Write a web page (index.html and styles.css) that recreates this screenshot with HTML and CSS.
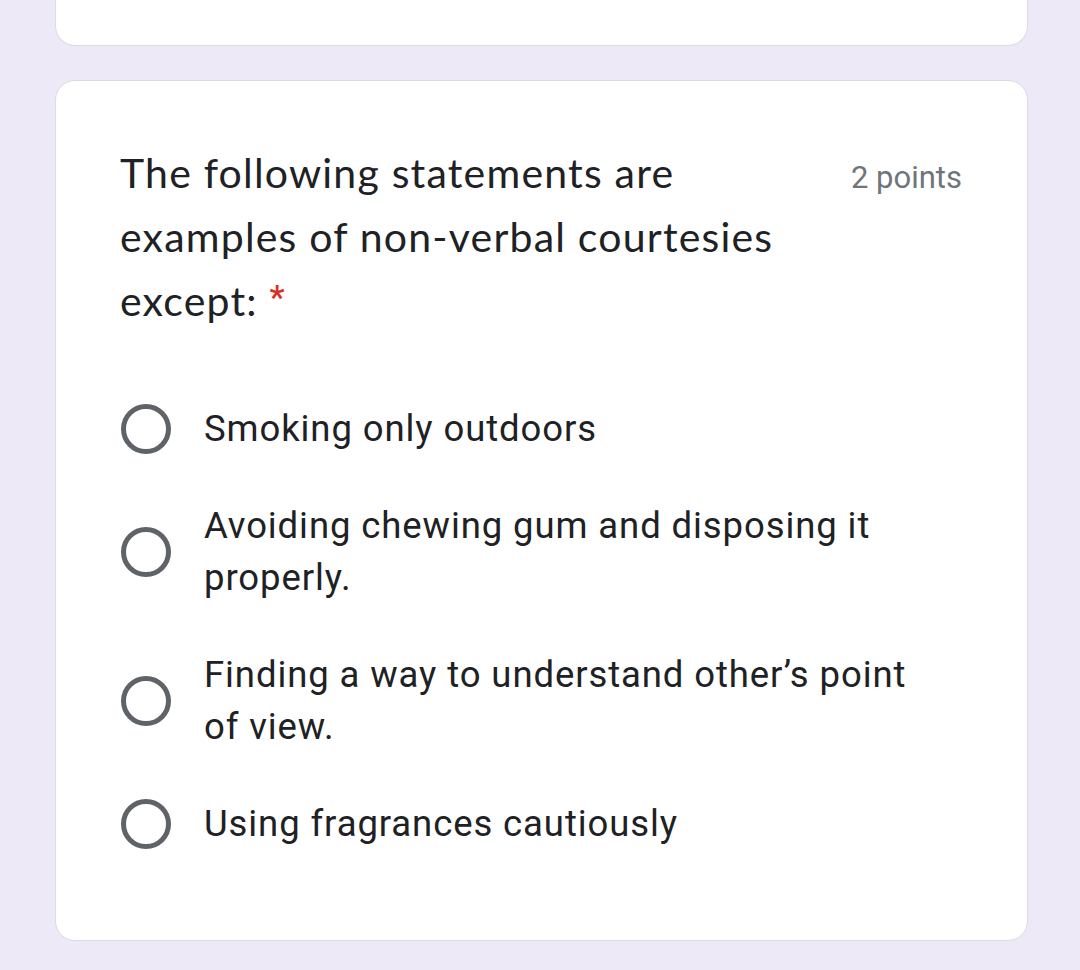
FILE: index.html
```html
<!DOCTYPE html>
<html lang="en">
<head>
<meta charset="utf-8">
<title>Question</title>
<link rel="stylesheet" href="styles.css">
</head>
<body>
<main class="page">
  <section class="card card-prev"></section>
  <section class="card question">
    <div class="question-head">
      <div class="question-title">The following statements are examples of non-verbal courtesies except: <span class="required">*</span></div>
      <div class="points">2 points</div>
    </div>
    <div class="options">
      <label class="option">
        <span class="radio"></span>
        <span class="option-text">Smoking only outdoors</span>
      </label>
      <label class="option">
        <span class="radio"></span>
        <span class="option-text">Avoiding chewing gum and disposing it properly.</span>
      </label>
      <label class="option">
        <span class="radio"></span>
        <span class="option-text">Finding a way to understand other’s point of view.</span>
      </label>
      <label class="option">
        <span class="radio"></span>
        <span class="option-text">Using fragrances cautiously</span>
      </label>
    </div>
  </section>
</main>
</body>
</html>
```

FILE: styles.css
```css
html, body {
  margin: 0;
  padding: 0;
}

body {
  background: #ede9f7;
  font-family: Roboto, "Noto Sans", "Liberation Sans", sans-serif;
  color: #202124;
  height: 970px;
  overflow: hidden;
}

.page {
  display: flex;
  flex-direction: column;
  gap: 34px;
  padding: 0 52px 0 55px;
}

.card {
  background: #ffffff;
  border: 1px solid #dadce0;
  border-radius: 20px;
}

.card-prev {
  height: 45px;
  border-top: none;
  border-radius: 0 0 20px 20px;
}

.question {
  padding: 60px 65px 90px 64px;
}

.question-head {
  display: flex;
  align-items: baseline;
  gap: 24px;
}

.question-title {
  flex: 1;
  font-family: Lato, "Open Sans", sans-serif;
  font-size: 41px;
  letter-spacing: 1.2px;
  line-height: 64px;
  color: #202124;
}

.required {
  font-family: Roboto, sans-serif;
  font-size: 34px;
  font-weight: 500;
  line-height: 0;
  letter-spacing: 0;
  vertical-align: 7px;
  color: #d93025;
}

.points {
  font-family: Roboto, sans-serif;
  font-size: 31px;
  color: #70757a;
  white-space: nowrap;
}

.options {
  display: flex;
  flex-direction: column;
  gap: 45px;
  margin-top: 70px;
}

.option {
  display: flex;
  align-items: center;
  gap: 33px;
}

.radio {
  flex: none;
  box-sizing: border-box;
  width: 50px;
  height: 50px;
  margin-left: 1px;
  border: 5px solid #5f6368;
  border-radius: 50%;
}

.option-text {
  font-size: 36.5px;
  line-height: 52px;
  letter-spacing: 0.9px;
  color: #202124;
  max-width: 720px;
}
```
